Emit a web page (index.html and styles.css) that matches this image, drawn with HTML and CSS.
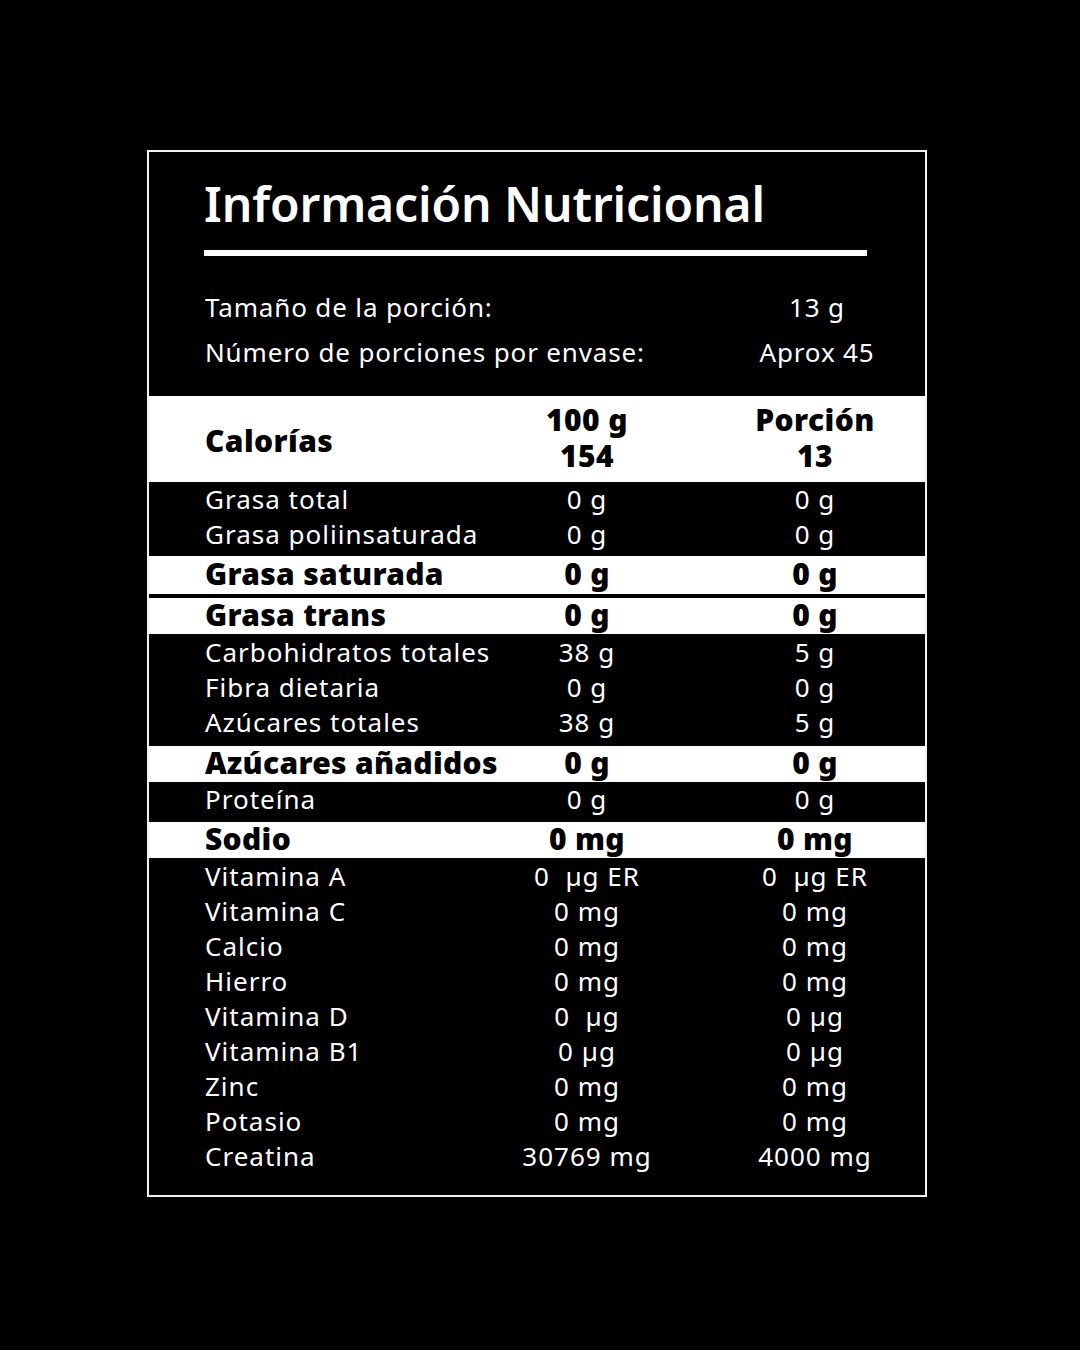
FILE: index.html
```html
<!DOCTYPE html>
<html lang="es">
<head>
<meta charset="utf-8">
<link rel="stylesheet" href="styles.css">
</head>
<body>
<div class="label">
  <div class="head">
    <h1 class="title">Información Nutricional</h1>
    <div class="rule"></div>
    <div class="serv">
      <div class="serv-row"><span class="serv-k">Tamaño de la porción:</span><span class="serv-v">13 g</span></div>
      <div class="serv-row"><span class="serv-k">Número de porciones por envase:</span><span class="serv-v">Aprox 45</span></div>
    </div>
  </div>

  <div class="band light cal">
    <div class="row cal-row">
      <span class="k">Calorías</span>
      <span class="v stack"><span class="ln">100 g</span><span class="ln">154</span></span>
      <span class="v stack"><span class="ln">Porción</span><span class="ln">13</span></span>
    </div>
  </div>

  <div class="band dark d1">
    <div class="row"><span class="k">Grasa total</span><span class="v">0 g</span><span class="v">0 g</span></div>
    <div class="row"><span class="k">Grasa poliinsaturada</span><span class="v">0 g</span><span class="v">0 g</span></div>
  </div>

  <div class="band light l-sat">
    <div class="row bold"><span class="k">Grasa saturada</span><span class="v">0 g</span><span class="v">0 g</span></div>
  </div>
  <div class="sep"></div>
  <div class="band light">
    <div class="row bold"><span class="k">Grasa trans</span><span class="v">0 g</span><span class="v">0 g</span></div>
  </div>

  <div class="band dark d2">
    <div class="row"><span class="k">Carbohidratos totales</span><span class="v">38 g</span><span class="v">5 g</span></div>
    <div class="row"><span class="k">Fibra dietaria</span><span class="v">0 g</span><span class="v">0 g</span></div>
    <div class="row"><span class="k">Azúcares totales</span><span class="v">38 g</span><span class="v">5 g</span></div>
  </div>

  <div class="band light">
    <div class="row bold"><span class="k">Azúcares añadidos</span><span class="v">0 g</span><span class="v">0 g</span></div>
  </div>

  <div class="band dark d3">
    <div class="row"><span class="k">Proteína</span><span class="v">0 g</span><span class="v">0 g</span></div>
  </div>

  <div class="band light">
    <div class="row bold"><span class="k">Sodio</span><span class="v">0 mg</span><span class="v">0 mg</span></div>
  </div>

  <div class="band dark vit">
    <div class="row"><span class="k">Vitamina A</span><span class="v">0&nbsp; µg ER</span><span class="v">0&nbsp; µg ER</span></div>
    <div class="row"><span class="k">Vitamina C</span><span class="v">0 mg</span><span class="v">0 mg</span></div>
    <div class="row"><span class="k">Calcio</span><span class="v">0 mg</span><span class="v">0 mg</span></div>
    <div class="row"><span class="k">Hierro</span><span class="v">0 mg</span><span class="v">0 mg</span></div>
    <div class="row"><span class="k">Vitamina D</span><span class="v">0&nbsp; µg</span><span class="v">0 µg</span></div>
    <div class="row"><span class="k">Vitamina B1</span><span class="v">0 µg</span><span class="v">0 µg</span></div>
    <div class="row"><span class="k">Zinc</span><span class="v">0 mg</span><span class="v">0 mg</span></div>
    <div class="row"><span class="k">Potasio</span><span class="v">0 mg</span><span class="v">0 mg</span></div>
    <div class="row"><span class="k">Creatina</span><span class="v">30769 mg</span><span class="v">4000 mg</span></div>
  </div>
</div>
</body>
</html>
```

FILE: styles.css
```css
html, body {
  margin: 0;
  padding: 0;
  background: #000;
}
body {
  width: 1080px;
  height: 1350px;
  font-family: "Noto Sans", "Open Sans", sans-serif;
  color: #fff;
}
.label {
  margin: 150px 0 0 147px;
  width: 776px;
  height: 1043px;
  border: 2px solid #f2f2f2;
  background: #000;
  display: flex;
  flex-direction: column;
}
.head {
  padding: 24px 56px 0 55px;
  height: 220px;
  flex: none;
}
.title {
  margin: 0;
  font-size: 48px;
  font-weight: 600;
  letter-spacing: -0.1px;
  line-height: 56px;
  white-space: nowrap;
}
.rule {
  margin-top: 18px;
  width: 663px;
  height: 6px;
  background: #fff;
}
.serv {
  margin-top: 28px;
  display: flex;
  flex-direction: column;
}
.serv-row {
  display: grid;
  grid-template-columns: 513px 200px;
  height: 45px;
  align-items: center;
  font-size: 26px;
  letter-spacing: 0.85px;
  white-space: nowrap;
}
.serv-k {
  padding-left: 1px;
}
.serv-v {
  text-align: center;
}
.band {
  flex: none;
}
.band.dark {
  background: #000;
  color: #fff;
}
.band.light {
  background: #fff;
  color: #000;
}
.row {
  display: grid;
  grid-template-columns: 254px 200px 200px;
  column-gap: 28px;
  padding-left: 56px;
  height: 35px;
  box-sizing: border-box;
  padding-bottom: 4px;
  align-items: center;
  font-size: 26px;
  line-height: 30px;
  letter-spacing: 1px;
  white-space: nowrap;
}
.row .v {
  text-align: center;
}
.row.bold {
  height: 36px;
  padding-bottom: 3px;
  font-weight: 900;
  font-size: 30px;
  line-height: 32px;
  letter-spacing: 0.3px;
}
.l-sat .row.bold {
  height: 38px;
  padding-bottom: 2px;
}
.sep {
  height: 4px;
  background: #000;
  flex: none;
}
.cal-row {
  height: 86px;
  padding-bottom: 2px;
  font-weight: 900;
  font-size: 30px;
  letter-spacing: 0.4px;
}
.cal-row .k {
  padding-top: 6px;
}
.stack {
  display: flex;
  flex-direction: column;
  align-items: center;
}
.ln {
  display: block;
  line-height: 36px;
}
.d1 {
  padding: 1px 0 3px;
}
.d2 {
  padding: 2px 0 5px;
}
.d3 {
  padding: 1px 0 4px;
}
.vit {
  padding: 2px 0 0;
  flex: 1;
}
```
